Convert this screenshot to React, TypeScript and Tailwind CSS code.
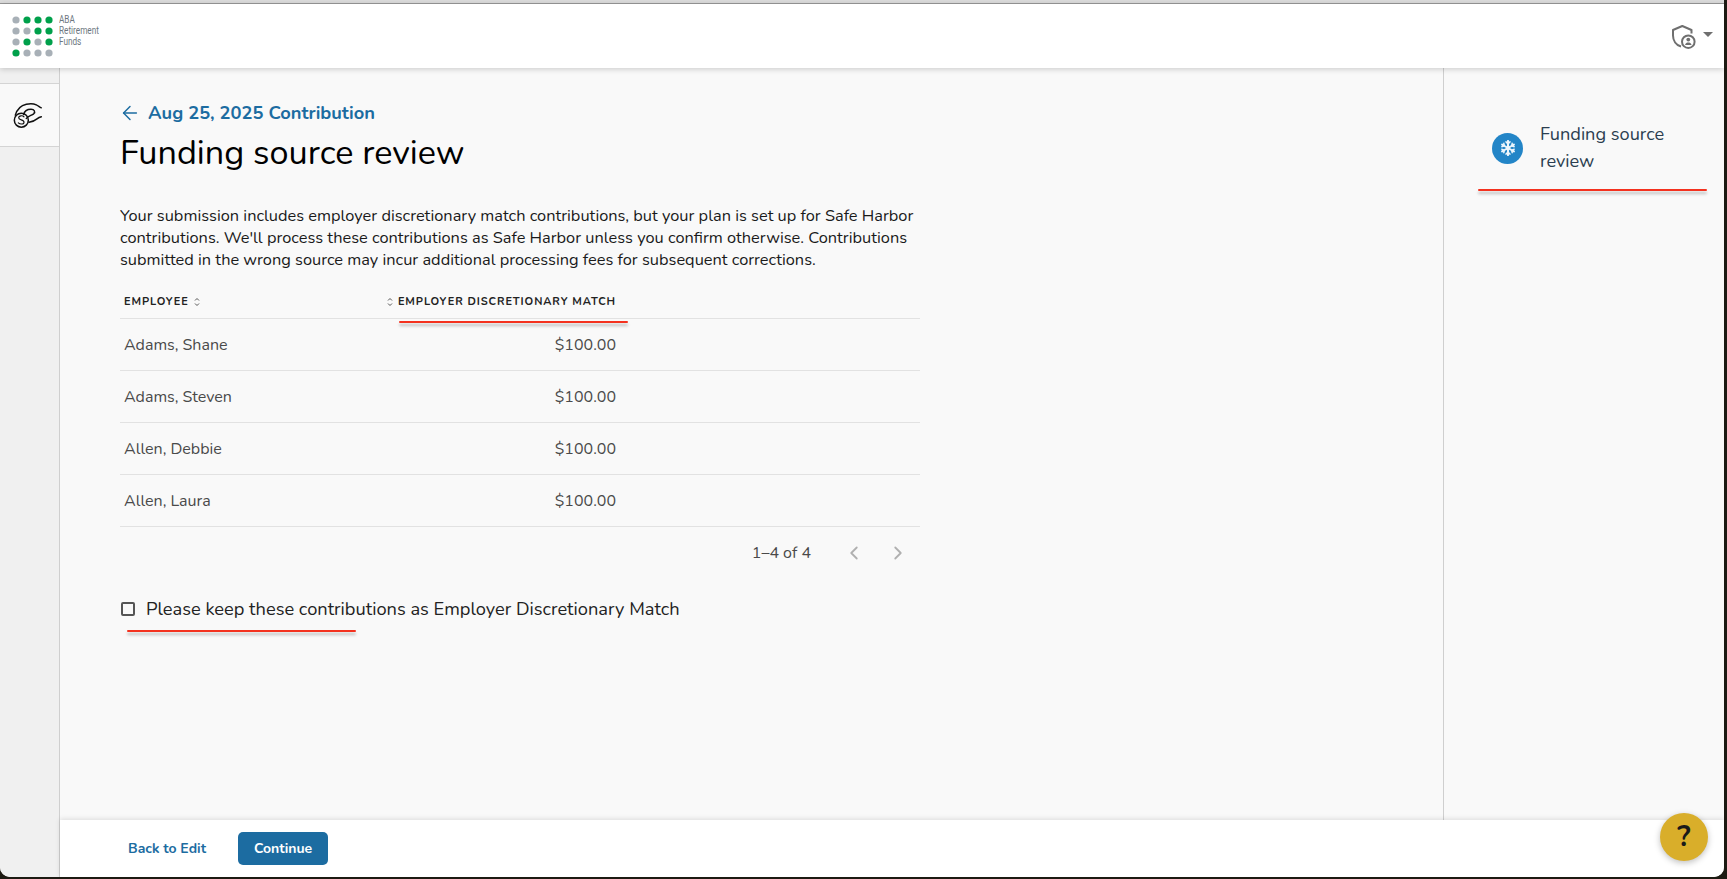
import React from "react";
import { ArrowLeft, ChevronLeft, ChevronRight } from "lucide-react";
import { FaSnowflake } from "react-icons/fa";

const pattern = ["0111", "0011", "0101", "1000"];

function Logo() {
  return (
    <svg width="41" height="41" viewBox="0 0 41 41" className="shrink-0">
      {pattern.map((r, y) =>
        r.split("").map((c, x) => (
          <circle key={`${x}-${y}`} cx={4 + x * 11} cy={4 + y * 11} r="3.6" fill={c === "1" ? "#00a04b" : "#a8b0b7"} />
        ))
      )}
    </svg>
  );
}

function HandCoin() {
  return (
    <svg width="30" height="27" viewBox="40 38 90 80" fill="none" stroke="#111" strokeWidth="4.5" strokeLinecap="round" strokeLinejoin="round">
      <circle cx="65" cy="95" r="21" />
      <path d="M73 85c-4-5-16-4-16 3 0 8 16 4 16 13 0 7-12 7-17 2" strokeWidth="3.5" />
      <path d="M47 80C52 62 66 50 80 47c14-3 24-1 30 2 6 3 10 7 15 9" />
      <path d="M72 78c2-10 10-16 22-16 10 0 14 8 8 14-6 5-18 6-22 14" />
      <path d="M88 101c10-1 18-5 24-10 4-3 8-5 13-6" />
    </svg>
  );
}

function Shield() {
  return (
    <svg width="28" height="28" viewBox="0 0 28 28" fill="none" stroke="#6f6f6f" strokeWidth="2">
      <path d="M10 24.500C5 23 2 18.500 2 13.500V8L11.300 4 20.500 8V11.500" strokeLinejoin="round" />
      <circle cx="17.300" cy="19.700" r="6.300" />
      <circle cx="17.300" cy="17.600" r="1.900" fill="#6f6f6f" stroke="none" />
      <path d="M14 23c.6-1.900 1.900-2.500 3.300-2.500s2.700.6 3.300 2.500z" fill="#6f6f6f" stroke="none" />
    </svg>
  );
}

function Sort() {
  return (
    <svg width="6" height="10" viewBox="0 0 6 10" fill="none" stroke="#555" strokeWidth="1" className="shrink-0">
      <path d="M1 3.500 3 1.500 5 3.500M1 6.500 3 8.500 5 6.500" />
    </svg>
  );
}

function Scribble({ w }: { w: number }) {
  return <div className="h-[1.5px] rounded-full bg-[#f4321f] shadow-[0_3px_3px_rgba(0,0,0,0.25)]" style={{ width: w }} />;
}

const people = ["Adams, Shane", "Adams, Steven", "Allen, Debbie", "Allen, Laura"];

export default function App() {
  return (
    <div className="relative h-[879px] w-[1727px] overflow-hidden bg-[#1c1a12] font-['Nunito','Noto_Sans',sans-serif]">
      <div className="flex h-[877px] w-[1724px] flex-col overflow-hidden rounded-b-[10px] bg-[#f9f9f9]">
        <div className="h-[3px] shrink-0 bg-[#dcdcdc]" />
        <div className="h-[1px] shrink-0 bg-[#9a9a9a]" />
        <header className="relative z-10 flex h-[64px] shrink-0 items-center justify-between bg-white pl-[12px] pr-[11px] shadow-[0_1px_6px_rgba(0,0,0,0.2)]">
          <div className="flex items-center gap-[6px]">
            <Logo />
            <div className="-mt-[11px] origin-left scale-x-[0.82] font-['Roboto',sans-serif] text-[10px] leading-[11px] text-[#6d7780]">
              <div>ABA</div>
              <div>Retirement</div>
              <div>Funds</div>
            </div>
          </div>
          <div className="flex items-center gap-[4px]">
            <Shield />
            <div className="-mt-[4px] h-0 w-0 border-x-[5px] border-t-[5px] border-x-transparent border-t-[#6f6f6f]" />
          </div>
        </header>

        <div className="flex min-h-0 flex-1">
          <aside className="flex w-[60px] shrink-0 flex-col border-r border-[#cfcfcf] bg-[#f0f0f0]">
            <div className="h-[16px] border-b border-[#d4d4d4]" />
            <div className="flex h-[63px] items-center justify-center border-b border-[#d4d4d4] bg-[#f9f9f9] pb-[1px] pr-[4px]">
              <HandCoin />
            </div>
          </aside>

          <div className="flex min-w-0 flex-1 flex-col">
            <div className="flex min-h-0 flex-1">
              <main className="w-[1384px] shrink-0 border-r border-[#cfcfcf] pl-[60px] pt-[33px]">
                <div className="-ml-[1px] flex items-center gap-[7px] text-[18.300px] font-bold leading-[24px] text-[#1c6ca1]">
                  <ArrowLeft size={22} strokeWidth={1.6} />
                  <span>Aug 25, 2025 Contribution</span>
                </div>
                <h1 className="mt-[7px] text-[34.200px] font-normal leading-[42px] text-black">Funding source review</h1>
                <p className="mt-[31px] w-[810px] text-[16.360px] leading-[22px] text-[#1a1a1a]">
                  Your submission includes employer discretionary match contributions, but your plan is set up for Safe Harbor contributions. We'll process these contributions as Safe Harbor unless you confirm otherwise. Contributions submitted in the wrong source may incur additional processing fees for subsequent corrections.
                </p>

                <div className="mt-[15px] w-[800px]">
                  <div className="flex h-[33px] items-center border-b border-[#e2e2e2] text-[11px] font-bold tracking-[0.9px] text-[#222]">
                    <div className="flex w-[264px] items-center gap-[5px] pl-[4px]">
                      EMPLOYEE <Sort />
                    </div>
                    <div className="flex w-[232px] items-center justify-end gap-[5px] whitespace-nowrap">
                      <Sort /> EMPLOYER DISCRETIONARY MATCH
                    </div>
                  </div>
                  {people.map((p) => (
                    <div key={p} className="flex h-[52px] items-center border-b border-[#e2e2e2] text-[16px] text-[#4a4a4a]">
                      <div className="w-[264px] pl-[4px]">{p}</div>
                      <div className="w-[232px] text-right">$100.00</div>
                    </div>
                  ))}
                  <div className="flex h-[52px] items-center justify-end text-[16px] text-[#4a4a4a]">
                    <span className="mr-[32px]">1–4 of 4</span>
                    <ChevronLeft size={22} strokeWidth={2} className="mr-[22px] text-[#b0b0b0]" />
                    <ChevronRight size={22} strokeWidth={2} className="mr-[11px] text-[#b0b0b0]" />
                  </div>
                  <div className="mt-[18px] flex items-center gap-[11px] pl-[1px]">
                    <div className="h-[14px] w-[14px] rounded-[2px] border-2 border-[#555]" />
                    <span className="text-[18.250px] leading-[24px] text-[#222]">Please keep these contributions as Employer Discretionary Match</span>
                  </div>
                </div>
              </main>
              <section className="flex-1 pl-[48px] pt-[53px]">
                <div className="flex items-center gap-[17px]">
                  <div className="flex h-[31px] w-[31px] items-center justify-center rounded-full bg-[#2385c7]">
                    <FaSnowflake size={16} className="text-[#eef6fc]" />
                  </div>
                  <div className="w-[150px] text-[18.200px] leading-[27px] text-[#2b3e50]">Funding source review</div>
                </div>
              </section>
            </div>
            <footer className="relative z-10 flex h-[57px] shrink-0 items-center bg-white pl-[68px] shadow-[0_-1px_5px_rgba(0,0,0,0.12)]">
              <span className="text-[14px] font-bold text-[#1c6ca1]">Back to Edit</span>
              <button className="ml-[32px] h-[33px] w-[90px] rounded-[5px] bg-[#1c6ca1] text-[14px] font-bold text-white">Continue</button>
            </footer>
          </div>
        </div>
      </div>

      <div className="absolute left-[399px] top-[321px]"><Scribble w={229} /></div>
      <div className="absolute left-[127px] top-[630px]"><Scribble w={229} /></div>
      <div className="absolute left-[1478px] top-[189px]"><Scribble w={229} /></div>

      <div className="absolute left-[1660px] top-[813px] z-20 flex h-[48px] w-[48px] items-center justify-center rounded-full bg-[#d9ae2a] text-[29px] font-bold text-[#1a1a1a] shadow-[0_2px_6px_rgba(0,0,0,0.25)]">?</div>
    </div>
  );
}
